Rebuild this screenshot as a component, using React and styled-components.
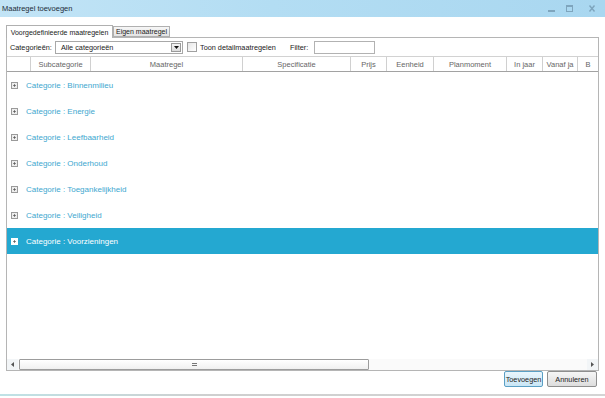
import React from "react";
import styled, { createGlobalStyle } from "styled-components";

const GlobalStyle = createGlobalStyle`
  html, body {
    margin: 0;
    padding: 0;
    background: #ffffff;
  }
  body {
    font-family: "Liberation Sans", Arial, sans-serif;
  }
`;

const columns = [
  "",
  "Subcategorie",
  "Maatregel",
  "Specificatie",
  "Prijs",
  "Eenheid",
  "Planmoment",
  "In jaar",
  "Vanaf ja",
  "B",
];

const categories = [
  "Binnenmilieu",
  "Energie",
  "Leefbaarheid",
  "Onderhoud",
  "Toegankelijkheid",
  "Veiligheid",
  "Voorzieningen",
];

export default function App() {
  return (
    <>
      <GlobalStyle />
      <Window>
        <TitleBar>
          <Title>Maatregel toevoegen</Title>
          <WindowButtons>
            <svg width="9" height="9" viewBox="0 0 9 9">
              <rect x="1" y="6" width="7" height="2" fill="#7ea5bd" />
            </svg>
            <svg width="9" height="9" viewBox="0 0 9 9">
              <rect x="1.5" y="1.5" width="6" height="6" fill="none" stroke="#7ea5bd" strokeWidth="1" />
              <rect x="1" y="1" width="7" height="2" fill="#7ea5bd" />
            </svg>
            <svg width="10" height="9" viewBox="0 0 10 9">
              <path d="M2.5 1.5 L7.5 7.5 M7.5 1.5 L2.5 7.5" stroke="#7ea5bd" strokeWidth="1.4" />
            </svg>
          </WindowButtons>
        </TitleBar>

        <Body>
          <TabStrip>
            <Tab active>Voorgedefinieerde maatregelen</Tab>
            <Tab>Eigen maatregel</Tab>
          </TabStrip>

          <TabPanel>
            <Toolbar>
              <Label>Categorieën:</Label>
              <Combo>
                <span>Alle categorieën</span>
                <ComboButton>
                  <svg width="5" height="3" viewBox="0 0 5 3">
                    <path d="M0 0 L5 0 L2.5 3 Z" fill="#111" />
                  </svg>
                </ComboButton>
              </Combo>
              <Check />
              <CheckLabel>Toon detailmaatregelen</CheckLabel>
              <FilterLabel>Filter:</FilterLabel>
              <FilterInput />
            </Toolbar>

            <Grid>
              <HeaderRow>
                {columns.map((c, i) => (
                  <HeaderCell key={i} first={i === 0}>
                    {c}
                  </HeaderCell>
                ))}
              </HeaderRow>

              <Rows>
                {categories.map((c, i) => (
                  <GroupRow key={c} selected={i === categories.length - 1}>
                    <Expander selected={i === categories.length - 1}>
                      <svg width="5" height="5" viewBox="0 0 5 5">
                        <path d="M0 2.5 H5 M2.5 0 V5" stroke="#444" strokeWidth="1" />
                      </svg>
                    </Expander>
                    Categorie : {c}
                  </GroupRow>
                ))}
              </Rows>

              <HScroll>
                <ScrollArrow>
                  <svg width="3" height="5" viewBox="0 0 3 5">
                    <path d="M3 0 L0 2.5 L3 5 Z" fill="#555" />
                  </svg>
                </ScrollArrow>
                <Track>
                  <Thumb>
                    <Grip />
                  </Thumb>
                </Track>
                <ScrollArrow>
                  <svg width="3" height="5" viewBox="0 0 3 5">
                    <path d="M0 0 L3 2.5 L0 5 Z" fill="#555" />
                  </svg>
                </ScrollArrow>
              </HScroll>
            </Grid>
          </TabPanel>

          <Footer>
            <Button primary>Toevoegen</Button>
            <Button>Annuleren</Button>
          </Footer>
        </Body>
        <BottomEdge />
      </Window>
    </>
  );
}

const Window = styled.div`
  width: 605px;
  height: 398px;
  display: flex;
  flex-direction: column;
  background: #ffffff;
  overflow: hidden;
`;

const TitleBar = styled.div`
  height: 17px;
  flex: none;
  display: flex;
  align-items: center;
  justify-content: space-between;
  padding: 0 8px 0 2px;
  background: linear-gradient(90deg, #c2e4f6 0%, #b3ddf3 45%, #a9d7f0 100%);
`;

const Title = styled.div`
  font-size: 7.5px;
  color: #1d2c38;
`;

const WindowButtons = styled.div`
  display: flex;
  align-items: center;
  gap: 9px;
  svg:last-child {
    margin-left: 4px;
  }
`;

const Body = styled.div`
  flex: 1;
  display: flex;
  flex-direction: column;
  padding: 7px 6px 0 6px;
`;

const TabStrip = styled.div`
  display: flex;
  align-items: flex-end;
  height: 13px;
`;

const Tab = styled.div`
  height: ${(p) => (p.active ? "13px" : "11px")};
  width: ${(p) => (p.active ? "107px" : "57px")};
  box-sizing: border-box;
  border: 1px solid #b0b0b0;
  border-bottom: ${(p) => (p.active ? "none" : "1px solid #b0b0b0")};
  background: ${(p) => (p.active ? "#ffffff" : "linear-gradient(#f6f6f6, #e4e4e4)")};
  font-size: 7px;
  color: #222;
  display: flex;
  align-items: center;
  justify-content: center;
  white-space: nowrap;
  margin-bottom: ${(p) => (p.active ? "-1px" : "0")};
  position: relative;
  z-index: ${(p) => (p.active ? 1 : 0)};
`;

const TabPanel = styled.div`
  height: 334px;
  box-sizing: border-box;
  border: 1px solid #b5b5b5;
  display: flex;
  flex-direction: column;
`;

const Toolbar = styled.div`
  height: 18px;
  flex: none;
  display: flex;
  align-items: center;
  padding-left: 3px;
  font-size: 7.3px;
  color: #222;
`;

const Label = styled.span`
  width: 45px;
`;

const Combo = styled.div`
  width: 128px;
  height: 13px;
  box-sizing: border-box;
  border: 1px solid #a8a8a8;
  display: flex;
  align-items: center;
  justify-content: space-between;
  padding-left: 5px;
  background: #fff;
`;

const ComboButton = styled.div`
  width: 10px;
  height: 9px;
  margin-right: 1px;
  border: 1px solid #9a9a9a;
  box-sizing: border-box;
  background: linear-gradient(#f5f5f5, #dcdcdc);
  display: flex;
  align-items: center;
  justify-content: center;
`;

const Check = styled.div`
  width: 8px;
  height: 8px;
  margin-left: 4px;
  border: 1px solid #a0a0a0;
  background: linear-gradient(135deg, #e6e6e6, #ffffff);
`;

const CheckLabel = styled.span`
  margin-left: 3px;
  width: 90px;
`;

const FilterLabel = styled.span`
  width: 24px;
`;

const FilterInput = styled.div`
  width: 61px;
  height: 13px;
  box-sizing: border-box;
  border: 1px solid #b2b2b2;
  background: #fff;
`;

const Grid = styled.div`
  flex: 1;
  display: flex;
  flex-direction: column;
  min-height: 0;
`;

const HeaderRow = styled.div`
  height: 14px;
  flex: none;
  display: grid;
  grid-template-columns: 23px 60px 152px 108px 36px 47px 73px 36px 35px 1fr;
  border-top: 1px solid #d2d2d2;
  border-bottom: 1px solid #a2a2a2;
`;

const HeaderCell = styled.div`
  border-left: ${(p) => (p.first ? "none" : "1px solid #d0d0d0")};
  font-size: 7.5px;
  color: #666;
  display: flex;
  align-items: center;
  justify-content: center;
  overflow: hidden;
  white-space: nowrap;
`;

const Rows = styled.div`
  flex: 1;
`;

const GroupRow = styled.div`
  height: 26px;
  display: flex;
  align-items: center;
  padding-left: 4px;
  font-size: 8px;
  color: ${(p) => (p.selected ? "#ffffff" : "#3ea7cf")};
  background: ${(p) => (p.selected ? "#24a8d1" : "transparent")};
`;

const Expander = styled.div`
  width: 7px;
  height: 7px;
  box-sizing: border-box;
  border: 1px solid ${(p) => (p.selected ? "#ffffff" : "#9a9a9a")};
  background: ${(p) => (p.selected ? "#ffffff" : "#eeeeee")};
  display: flex;
  align-items: center;
  justify-content: center;
  margin-right: 8px;
  svg {
    width: 3px;
    height: 3px;
  }
`;

const HScroll = styled.div`
  height: 11px;
  flex: none;
  display: flex;
  align-items: stretch;
  background: #fafafa;
`;

const ScrollArrow = styled.div`
  width: 11px;
  display: flex;
  align-items: center;
  justify-content: center;
  background: #f2f5f7;
`;

const Track = styled.div`
  flex: 1;
  display: flex;
  align-items: stretch;
  padding: 0 1px;
`;

const Thumb = styled.div`
  width: 350px;
  box-sizing: border-box;
  border: 1px solid #9c9c9c;
  border-radius: 1px;
  background: linear-gradient(#ffffff, #f0f0f0);
  display: flex;
  align-items: center;
  justify-content: center;
`;

const Grip = styled.div`
  width: 5px;
  height: 3px;
  border-top: 1px solid #777;
  border-bottom: 1px solid #777;
  box-sizing: border-box;
  background: linear-gradient(transparent 0, transparent 1px, #999 1px);
`;

const Footer = styled.div`
  display: flex;
  justify-content: flex-end;
  gap: 4px;
  padding: 0 2px 0 0;
  margin-top: 0;
`;

const Button = styled.div`
  width: ${(p) => (p.primary ? "39px" : "50px")};
  height: 16px;
  box-sizing: border-box;
  border: 1px solid ${(p) => (p.primary ? "#5b9fc4" : "#8e8e8e")};
  border-radius: 2px;
  background: ${(p) =>
    p.primary ? "linear-gradient(#eaf6fd, #c9e6f6)" : "linear-gradient(#f6f6f6, #dddddd)"};
  font-size: 7.3px;
  color: #222;
  display: flex;
  align-items: center;
  justify-content: center;
`;

const BottomEdge = styled.div`
  height: 2px;
  margin-bottom: 2px;
  background: linear-gradient(90deg, #bfe2e6 0%, #cfcfcf 35%, #d4d4d4 100%);
`;
